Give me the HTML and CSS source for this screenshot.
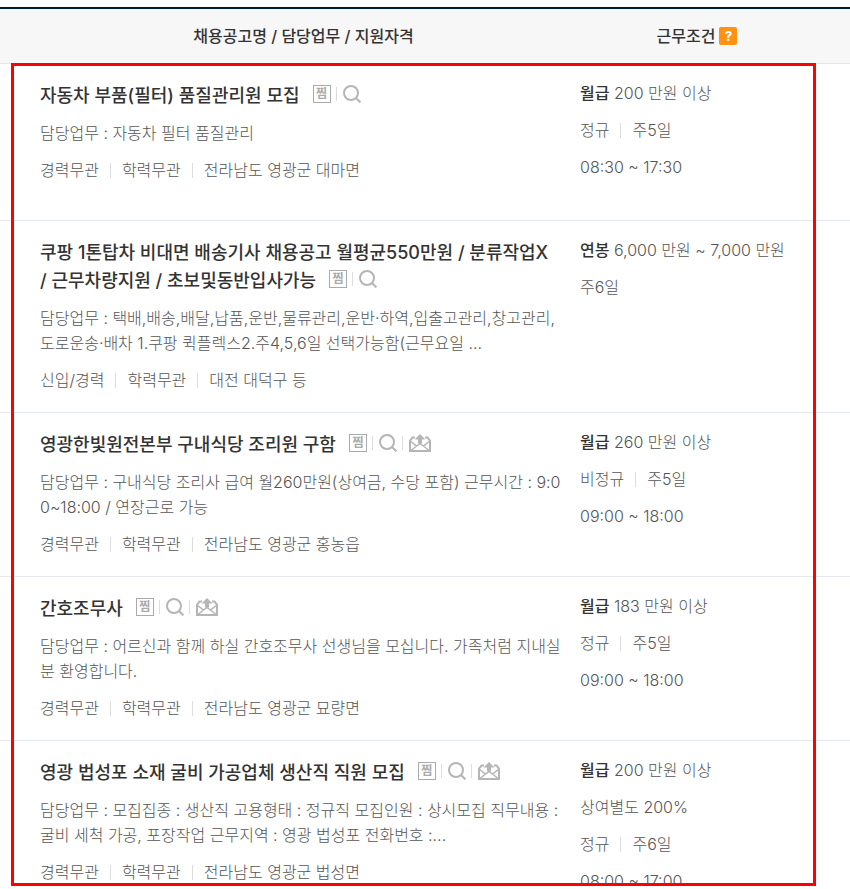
FILE: index.html
```html
<!DOCTYPE html>
<html lang="ko">

<head>
    <meta charset="UTF-8">
    <meta name="viewport" content="width=device-width, initial-scale=1.0">
    <title>채용정보</title>
    <link rel="stylesheet" href="styles.css">
</head>

<body>
    <!-- shared icons -->
    <svg class="sprite" aria-hidden="true">
        <symbol id="search" viewBox="0 0 18 18">
            <circle cx="8" cy="8" r="7" fill="none" stroke="currentColor" stroke-width="2" />
            <path d="M13 13l4.4 4.4" stroke="currentColor" stroke-width="2" />
        </symbol>
        <symbol id="mail" viewBox="0 0 22 18">
            <path d="M6 3.500H3.500L1 6.500V17h20V6.500l-2.500-3H16" fill="none" stroke="currentColor" stroke-width="2" />
            <path d="M1 7l6.500 5L11 9.500l3.500 2.500L21 7M2 16.500l5.500-4.500M20 16.500L14.500 12" fill="none" stroke="currentColor" stroke-width="1.500" />
            <path d="M11 0l5.500 5.500H13V9.500H9V5.500H5.500z" fill="currentColor" />
        </symbol>
    </svg>

    <div class="page">
        <table class="jobs">
            <colgroup>
                <col>
                <col class="col-cond">
                <col class="col-end">
            </colgroup>
            <thead>
                <tr>
                    <th>채용공고명 / 담당업무 / 지원자격</th>
                    <th><span class="cond-head">근무조건 <button class="help" type="button">?</button></span></th>
                    <td></td>
                </tr>
            </thead>
            <tbody>
                <tr>
                    <td>
                        <div class="title"><a href="#">자동차 부품(필터) 품질관리원 모집</a><span class="icons"><button class="zzim" type="button">찜</button><button type="button" aria-label="검색"><svg class="i-search"><use href="#search" /></svg></button></span></div>
                        <p class="desc">담당업무 : 자동차 필터 품질관리</p>
                        <p class="meta"><span>경력무관</span><span>학력무관</span><span>전라남도 영광군 대마면</span></p>
                    </td>
                    <td>
                        <p class="meta pay"><strong>월급</strong> 200 만원 이상</p>
                        <p class="meta"><span>정규</span><span>주5일</span></p>
                        <p class="meta">08:30 ~ 17:30</p>
                    </td>
                    <td></td>
                </tr>
                <tr>
                    <td>
                        <div class="title"><a href="#">쿠팡 1톤탑차 비대면 배송기사 채용공고 월평균550만원 / 분류작업X<br>/ 근무차량지원 / 초보및동반입사가능</a><span class="icons"><button class="zzim" type="button">찜</button><button type="button" aria-label="검색"><svg class="i-search"><use href="#search" /></svg></button></span></div>
                        <p class="desc">담당업무 : 택배,배송,배달,납품,운반,물류관리,운반·하역,입출고관리,창고관리,<br>도로운송·배차 1.쿠팡 퀵플렉스2.주4,5,6일 선택가능함(근무요일 ...</p>
                        <p class="meta"><span>신입/경력</span><span>학력무관</span><span>대전 대덕구 등</span></p>
                    </td>
                    <td>
                        <p class="meta pay"><strong>연봉</strong> 6,000 만원 ~ 7,000 만원</p>
                        <p class="meta">주6일</p>
                    </td>
                    <td></td>
                </tr>
                <tr>
                    <td>
                        <div class="title"><a href="#">영광한빛원전본부 구내식당 조리원 구함</a><span class="icons"><button class="zzim" type="button">찜</button><button type="button" aria-label="검색"><svg class="i-search"><use href="#search" /></svg></button><button type="button" aria-label="이메일 지원"><svg class="i-mail"><use href="#mail" /></svg></button></span></div>
                        <p class="desc">담당업무 : 구내식당 조리사 급여 월260만원(상여금, 수당 포함) 근무시간 : 9:0<br>0~18:00 / 연장근로 가능</p>
                        <p class="meta"><span>경력무관</span><span>학력무관</span><span>전라남도 영광군 홍농읍</span></p>
                    </td>
                    <td>
                        <p class="meta pay"><strong>월급</strong> 260 만원 이상</p>
                        <p class="meta"><span>비정규</span><span>주5일</span></p>
                        <p class="meta">09:00 ~ 18:00</p>
                    </td>
                    <td></td>
                </tr>
                <tr>
                    <td>
                        <div class="title"><a href="#">간호조무사</a><span class="icons"><button class="zzim" type="button">찜</button><button type="button" aria-label="검색"><svg class="i-search"><use href="#search" /></svg></button><button type="button" aria-label="이메일 지원"><svg class="i-mail"><use href="#mail" /></svg></button></span></div>
                        <p class="desc">담당업무 : 어르신과 함께 하실 간호조무사 선생님을 모십니다. 가족처럼 지내실 분 환영합니다.</p>
                        <p class="meta"><span>경력무관</span><span>학력무관</span><span>전라남도 영광군 묘량면</span></p>
                    </td>
                    <td>
                        <p class="meta pay"><strong>월급</strong> 183 만원 이상</p>
                        <p class="meta"><span>정규</span><span>주5일</span></p>
                        <p class="meta">09:00 ~ 18:00</p>
                    </td>
                    <td></td>
                </tr>
                <tr>
                    <td>
                        <div class="title"><a href="#">영광 법성포 소재 굴비 가공업체 생산직 직원 모집</a><span class="icons"><button class="zzim" type="button">찜</button><button type="button" aria-label="검색"><svg class="i-search"><use href="#search" /></svg></button><button type="button" aria-label="이메일 지원"><svg class="i-mail"><use href="#mail" /></svg></button></span></div>
                        <p class="desc">담당업무 : 모집집종 : 생산직 고용형태 : 정규직 모집인원 : 상시모집 직무내용 : 굴비 세척 가공, 포장작업 근무지역 : 영광 법성포 전화번호 :...</p>
                        <p class="meta"><span>경력무관</span><span>학력무관</span><span>전라남도 영광군 법성면</span></p>
                    </td>
                    <td>
                        <p class="meta pay"><strong>월급</strong> 200 만원 이상</p>
                        <p class="meta">상여별도 200%</p>
                        <p class="meta"><span>정규</span><span>주6일</span></p>
                        <p class="meta">08:00 ~ 17:00</p>
                    </td>
                    <td></td>
                </tr>
            </tbody>
        </table>
        <div class="highlight"></div>
    </div>
</body>

</html>
```

FILE: styles.css
```css
body {
    margin: 0;
    background-color: #fff;
    color: #555;
    font-family: Inter, 'Noto Sans CJK KR', sans-serif;
    font-size: 16px;
    font-weight: 300;
    line-height: 25px;
}

.sprite {
    display: none;
}

.page {
    position: relative;
    height: 100vh;
    padding-top: 7px;
    box-sizing: border-box;
    overflow: hidden;
}

.jobs {
    width: 100%;
    table-layout: fixed;
    border-collapse: separate;
    border-spacing: 0;
    border-top: 2px solid #001c33;
}

.col-cond {
    width: 240px;
}

.col-end {
    width: 36px;
}

.jobs th,
.jobs thead td {
    height: 54px;
    padding: 0 7px 0 40px;
    background-color: #f7f7f7;
    border-bottom: 1px solid #e5e5e5;
    color: #333;
    font-weight: 500;
}

.jobs tbody td {
    height: 119px;
    padding: 18px 7px 19px 40px;
    border-bottom: 1px solid #e3e9ef;
    vertical-align: top;
    word-break: break-all;
}

.jobs th + th,
.jobs tbody td + td {
    padding-left: 6px;
    padding-right: 0;
}

.jobs tbody td + td {
    padding-top: 17px;
}

.cond-head {
    display: flex;
    justify-content: center;
    align-items: center;
    gap: 4px;
}

button {
    padding: 0;
    border: 0;
    background: none;
    font-family: inherit;
    cursor: pointer;
}

.help {
    width: 18px;
    height: 18px;
    border-radius: 2px;
    background-color: #ff9113;
    color: #fff;
    font-size: 13px;
    font-weight: 800;
    line-height: 18px;
}

.title {
    color: #333;
    font-size: 18px;
    font-weight: 500;
    line-height: 28px;
}

.title a {
    color: inherit;
    text-decoration: none;
}

.icons {
    display: inline-flex;
    align-items: center;
    height: 18px;
    margin-left: 13px;
    vertical-align: 4px;
}

.icons button {
    display: flex;
    color: #b5b5b5;
}

/* thin divider between icons */
.icons button + button::before {
    content: '';
    width: 1px;
    height: 14px;
    margin: 2px 6px 0 5px;
    background-color: #ddd;
}

.icons .zzim {
    width: 18px;
    height: 18px;
    box-sizing: border-box;
    justify-content: center;
    align-items: center;
    border: 1px solid #aaa;
    color: #aaa;
    font-size: 12px;
    font-weight: 700;
    line-height: 16px;
}

.i-search {
    width: 18px;
    height: 18px;
}

.i-mail {
    width: 22px;
    height: 18px;
}

.desc {
    margin: 11px 0 12px;
}

.meta {
    display: flex;
    margin: 0 0 12px;
}

.meta:last-child {
    margin-bottom: 0;
}

.meta span + span {
    display: flex;
    align-items: center;
}

.meta span + span::before {
    content: '';
    width: 1px;
    height: 15px;
    margin: 0 11px;
    background-color: #ddd;
}

.pay {
    display: block;
}

.pay strong {
    color: #333;
    font-weight: 500;
}

.highlight {
    position: absolute;
    top: 63px;
    right: 34px;
    bottom: 3px;
    left: 11px;
    border: 3px solid #f00;
    box-shadow: 0 3px 0 #fff;
    pointer-events: none;
}
```
